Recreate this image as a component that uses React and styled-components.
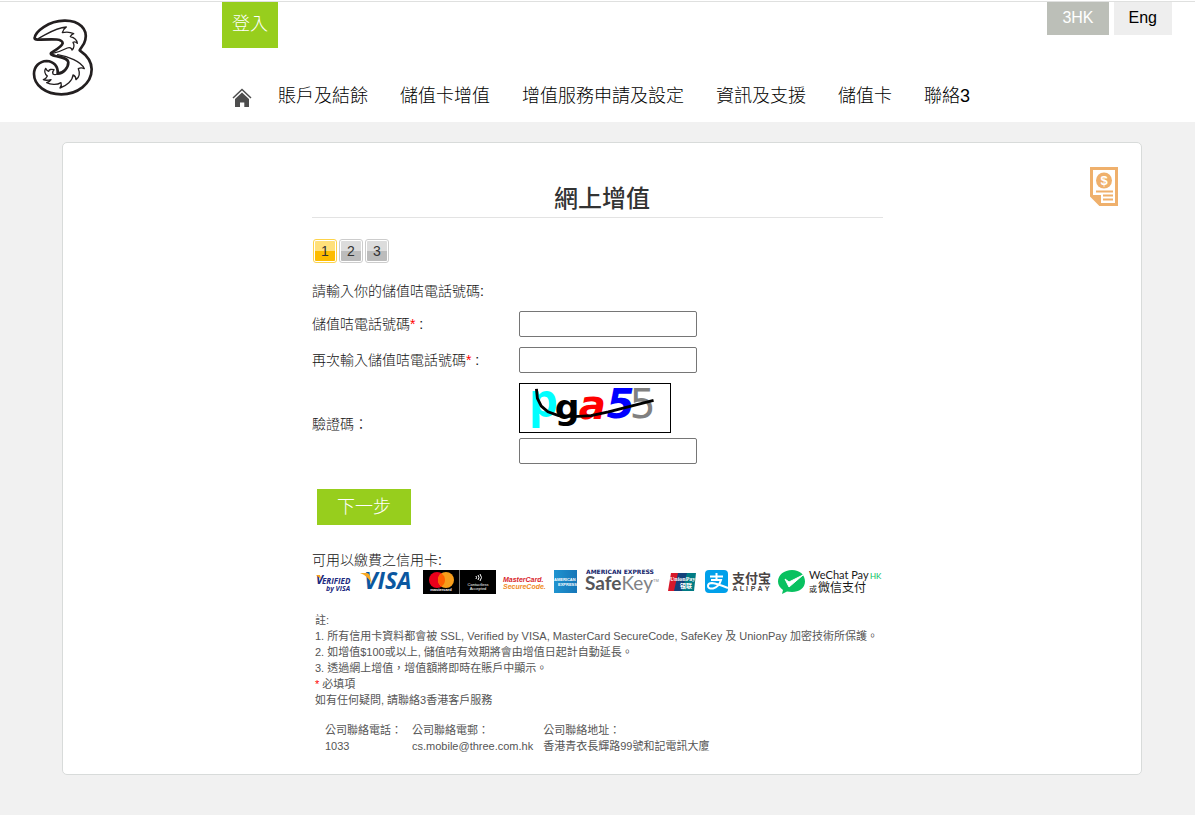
import React from 'react';
import styled, { createGlobalStyle } from 'styled-components';

const GlobalStyle = createGlobalStyle`
  *, *::before, *::after { box-sizing: border-box; }
  body {
    margin: 0;
    background: #f1f1f1;
    color: #333;
    font: 14px/20px "Liberation Sans", "Noto Sans CJK TC", sans-serif;
  }
  a { color: inherit; text-decoration: none; }
  svg { display: block; }
`;

const Header = styled.header`
  background: #fff;
  padding-top: 1px;
`;

const HeaderBar = styled.div`
  display: flex;
  align-items: flex-start;
  min-height: 121px;
  border-top: 1px solid #dfe0df;
`;

const LogoLink = styled.a`
  flex: none;
  width: 222px;
  padding: 16px 0 0 32px;
`;

const HeaderMain = styled.div`
  flex: 1;
  min-width: 0;
`;

const LoginLink = styled.a`
  display: inline-block;
  height: 46px;
  padding: 0 10px;
  background: #97ce1d;
  color: #fff;
  font-size: 18px;
  font-weight: 300;
  line-height: 44px;
  vertical-align: top;
`;

const Nav = styled.nav`
  display: flex;
  align-items: center;
  gap: 26px;
  padding: 34px 0 0 10px;
`;

const HomeLink = styled.a`
  padding-top: 3px;
`;

const NavList = styled.ul`
  display: flex;
  flex-wrap: wrap;
  column-gap: 32px;
  margin: 0;
  padding: 0;
  list-style: none;
  color: #000;
  font-size: 18px;
  font-weight: 300;
  line-height: 28px;
`;

const Languages = styled.div`
  display: flex;
  gap: 5px;
  margin-right: 23px;
`;

const LanguageLink = styled.a`
  height: 33px;
  padding: 0 15px;
  font-size: 16px;
  line-height: 31px;
  background: ${(p) => (p.$muted ? '#bcbfb8' : '#eee')};
  color: ${(p) => (p.$muted ? '#fff' : '#000')};
`;

const Card = styled.main`
  display: grid;
  grid-template-columns: 1fr minmax(0, 580px) 1fr;
  margin: 20px 53px 40px 62px;
  padding: 24px 23px 20px;
  background: #fff;
  border: 1px solid #d8dbda;
  border-radius: 5px;
`;

const Content = styled.div`
  grid-column: 2;
`;

const BillIcon = styled.svg`
  grid-column: 3;
  justify-self: end;
`;

const Title = styled.h1`
  margin: 16px 0 2px;
  font-size: 24px;
  font-weight: 500;
  line-height: 32px;
  text-align: center;
`;

const Divider = styled.hr`
  max-width: 571px;
  height: 1px;
  margin: 0;
  border: 0;
  background: #e3e3e3;
`;

const Steps = styled.ol`
  display: flex;
  gap: 2px;
  margin: 21px 0 18px;
  padding: 0 0 0 1px;
  list-style: none;
`;

const Step = styled.li`
  width: 24px;
  height: 24px;
  padding: 1px;
  border: 1px solid ${(p) => (p.$active ? '#fdd34a' : '#ccc')};
  border-radius: 3px;
  background: ${(p) =>
    p.$active
      ? 'linear-gradient(#ffe07a 50%, #fdbc00 50%)'
      : 'linear-gradient(#dcdcdc 50%, #bcbcbc 50%)'};
  background-clip: content-box;
  line-height: 20px;
  text-align: center;
`;

const Intro = styled.p`
  margin: 0;
  color: #111;
  font-weight: 300;
`;

const Form = styled.form`
  display: grid;
  gap: 10px;
  margin-top: 10px;
`;

const Row = styled.div`
  display: grid;
  grid-template-columns: 207px 1fr;
  align-items: center;
`;

const Label = styled.label`
  color: #111;
  font-weight: 300;
`;

const Required = styled.span`
  color: #f00;
`;

const Fields = styled.div`
  display: grid;
  gap: 5px;
  justify-items: start;
`;

const TextInput = styled.input`
  width: 178px;
  height: 26px;
  padding: 1px 4px;
  border: 1px solid #767676;
  border-radius: 2px;
  background: #fff;
  font: inherit;
`;

const Captcha = styled.svg`
  border: 1px solid #000;
`;

const NextButton = styled.button`
  justify-self: start;
  height: 36px;
  margin: 15px 0 0 5px;
  padding: 0 20px 4px;
  border: 0;
  background: #97ce1d;
  color: #fff;
  font-family: inherit;
  font-size: 18px;
  font-weight: 300;
`;

const Payment = styled.section`
  margin-top: 25px;
`;

const CardLogos = styled.div`
  display: flex;
  flex-wrap: wrap;
  gap: 8px;
  padding-left: 4px;

  svg { flex: none; overflow: visible; }
`;

const Notes = styled.section`
  margin-top: 18px;
  padding-left: 3px;
  color: #555;
  font-size: 11px;
  line-height: 16px;

  p { margin: 0; }
`;

const Contacts = styled.dl`
  display: flex;
  flex-wrap: wrap;
  gap: 10px;
  margin: 14px 0 0;
  padding-left: 10px;

  dd { margin: 0; }
`;

const navItems = ['賬戶及結餘', '儲值卡增值', '增值服務申請及設定', '資訊及支援', '儲值卡', '聯絡3'];

const contacts = [
  ['公司聯絡電話：', '1033'],
  ['公司聯絡電郵：', 'cs.mobile@three.com.hk'],
  ['公司聯絡地址：', '香港青衣長輝路99號和記電訊大廈'],
];

function ThreeLogo() {
  return (
    <svg width="62" height="78" viewBox="96 54 186 234" fill="none" stroke="#231f20" strokeLinejoin="round" strokeLinecap="round" role="img" aria-label="3">
      <path strokeWidth="8" d="M104 114C105 96 145 62 193 62C240 61 263 89 256 119C253 135 242 143 239 151C261 166 275 184 275 208C275 252 231 283 184 283C137 283 102 256 102 222C102 199 118 184 140 183C161 184 175 199 173 221C190 220 205 204 205 187C203 173 183 172 166 168C159 166 150 163 153 159C161 153 186 141 188 130C188 116 162 117 121 119C110 119 103 118 104 114Z" />
      <path strokeWidth="4" d="M116 115C145 100 167 83 199 81C191 87 188 92 187 98C199 95 213 97 221 101C216 103 213 106 211 110C223 113 231 121 232 130C228 126 222 125 219 127C225 137 222 144 216 150C215 144 209 141 202 144C190 150 177 156 158 160" />
      <path strokeWidth="4" d="M173 164C204 169 244 184 253 206C247 203 240 203 235 206C240 218 238 231 228 239C228 232 225 227 219 225C218 242 200 257 180 264C184 259 185 253 183 248C171 256 151 254 140 248C147 246 151 243 153 239C144 241 135 241 130 239C136 237 140 233 142 228C135 222 132 213 137 205C139 210 142 213 146 214C147 208 154 207 162 209C158 213 157 217 159 222C163 225 168 224 172 222" />
    </svg>
  );
}

function HomeIcon() {
  return (
    <svg width="20" height="19" viewBox="0 0 20 19" role="img" aria-label="主頁">
      <path d="M1 10L10 1.5L19 10" fill="none" stroke="#4d4d4d" strokeWidth="1.5" />
      <path d="M3 11L10 4.5L17 11V19H12.3V14.5H8V19H3Z" fill="#4d4d4d" />
    </svg>
  );
}

function CaptchaImage() {
  return (
    <Captcha width="152" height="50" viewBox="0 0 152 50" role="img" aria-label="驗證碼圖片">
      <g fontFamily="DejaVu Sans" fontWeight="700" fontSize="42">
        <text x="7" y="34" fill="#0ff" fontFamily="Open Sans" fontSize="48">p</text>
        <text x="34" y="36" fill="#000" fontSize="36">g</text>
        <text x="59" y="36" fill="#f00" fontStyle="italic">a</text>
        <text x="88" y="35" fill="#00f" fontStyle="italic">5</text>
        <text x="112" y="35" fill="#808080" fontWeight="400" fontSize="43">5</text>
      </g>
      <path d="M15 5L16 15L20 23L27 29L38 33L54 34L72 33L90 29L137 17" fill="none" stroke="#000" strokeWidth="3" />
    </Captcha>
  );
}

function PaymentLogos() {
  return (
    <CardLogos>
      <svg width="36" height="24" viewBox="0 0 36 24" role="img" aria-label="Verified by VISA">
        <g fill="#1b2a80" fontFamily="Open Sans" fontWeight="700" fontStyle="italic">
          <text x="0" y="14" fontSize="12">V</text>
          <text x="6" y="14" fontSize="8">ERIFIED</text>
          <text x="10" y="21" fontSize="7">by VISA</text>
        </g>
        <path d="M0 5H4L5 9Z" fill="#f9a51a" />
      </svg>
      <svg width="55" height="24" viewBox="0 0 55 24" role="img" aria-label="VISA">
        <text x="4" y="19" fontFamily="Open Sans" fontWeight="700" fontStyle="italic" fontSize="23" fill="#0b57a0">VISA</text>
        <path d="M0 3H7Q9 3 10 6L12 14Q8 6 0 3Z" fill="#f7a823" />
      </svg>
      <svg width="73" height="24" viewBox="0 0 73 24" role="img" aria-label="mastercard contactless">
        <path d="M0 0H73V24H0Z" fill="#000" />
        <circle cx="14" cy="10" r="8" fill="#eb001b" />
        <circle cx="23" cy="10" r="8" fill="#f79e1b" />
        <path d="M18.500 3.400A8 8 0 0 1 18.500 16.600A8 8 0 0 1 18.500 3.400Z" fill="#ff5f00" />
        <path d="M36.500 0V24" stroke="#777" />
        <g fill="#fff" fontFamily="Liberation Sans" fontSize="4" textAnchor="middle">
          <text x="18" y="21" fontWeight="700">mastercard</text>
          <text x="55" y="16">Contactless</text>
          <text x="55" y="20">Accepted</text>
        </g>
        <path d="M53 6Q54 7.500 53 9M55 5Q57 7.500 55 10M57 4Q60 7.500 57 11" fill="none" stroke="#fff" />
      </svg>
      <svg width="40" height="24" viewBox="0 0 40 24" role="img" aria-label="MasterCard SecureCode">
        <g fontFamily="Liberation Sans" fontWeight="700" fontStyle="italic" fontSize="7">
          <text x="-1" y="12" fill="#d8232a">MasterCard.</text>
          <text x="-1" y="19" fill="#f08a24">SecureCode.</text>
        </g>
      </svg>
      <svg width="25" height="24" viewBox="0 0 25 24" role="img" aria-label="American Express">
        <defs>
          <linearGradient id="amex" x2="1">
            <stop stopColor="#1f94d0" />
            <stop offset="1" stopColor="#1676b8" />
          </linearGradient>
        </defs>
        <path d="M2 0H25V23H2Z" fill="url(#amex)" />
        <g fill="#fff" fontFamily="Liberation Sans" fontWeight="700" fontSize="4">
          <text x="2" y="11">AMERICAN</text>
          <text x="6" y="16">EXPRESS</text>
        </g>
      </svg>
      <svg width="74" height="24" viewBox="0 0 74 24" role="img" aria-label="American Express SafeKey">
        <text x="1" y="4" fontFamily="DejaVu Sans" fontWeight="700" fontSize="6" fill="#14246b">AMERICAN EXPRESS</text>
        <text x="0" y="20" fontFamily="Lato" fontSize="19" fill="#808285">
          <tspan fontWeight="700" fill="#55565a">Safe</tspan>Key
        </text>
        <text x="68" y="12" fontFamily="Liberation Sans" fontSize="4" fill="#808285">TM</text>
      </svg>
      <svg width="30" height="24" viewBox="0 0 30 24" role="img" aria-label="UnionPay">
        <path d="M4 3H13L9 21H1Z" fill="#d7182a" />
        <path d="M11 3H21L17 21H7Z" fill="#14417b" />
        <path d="M20 3H29L27 21H15Z" fill="#007b84" />
        <g fill="#fff" fontWeight="700" fontFamily="Liberation Serif, Noto Sans CJK SC" fontSize="6">
          <text x="3" y="11">UnionPay</text>
          <text x="13" y="18">银联</text>
        </g>
      </svg>
      <svg width="65" height="24" viewBox="0 0 65 24" role="img" aria-label="支付宝 ALIPAY">
        <rect width="23" height="23" rx="4" fill="#00a0ea" />
        <path d="M5 6.500H18M11.500 3V9.500M6 10H16Q14 17 8 18.500Q3 19 3 16Q3 13 7 13Q12 13.500 23 18" fill="none" stroke="#fff" strokeWidth="2" />
        <text x="27" y="13" fontFamily="Noto Sans CJK SC" fontWeight="700" fontSize="13" fill="#4a4444">支付宝</text>
        <g fontFamily="Liberation Sans" fontWeight="700" fontSize="7" fill="#4a4444" textAnchor="middle">
          <text x="30" y="21">A</text><text x="37" y="21">L</text><text x="42" y="21">I</text>
          <text x="48" y="21">P</text><text x="55" y="21">A</text><text x="62" y="21">Y</text>
        </g>
      </svg>
      <svg width="103" height="24" viewBox="0 0 103 24" role="img" aria-label="WeChat Pay HK 或微信支付">
        <path d="M14 0C22 0 27 5 27 11.500C27 18 21 22 14 22L9 21.500L4 24L5 20C2 18 0 15 0 11.500C0 5 6 0 14 0Z" fill="#09c160" />
        <path d="M7 9L11 12L25 5L11 17Z" fill="#fff" stroke="#fff" strokeLinejoin="round" />
        <g fontFamily="Lato, Noto Sans CJK TC" fill="#1a1a1a">
          <text x="31" y="9" fontSize="11">WeChat Pay</text>
          <text x="92" y="9" fontSize="8" fill="#09c160">HK</text>
          <text x="31" y="22" fontSize="8">或</text>
          <text x="40" y="22" fontSize="12">微信支付</text>
        </g>
      </svg>
    </CardLogos>
  );
}

export default function App() {
  return (
    <>
      <GlobalStyle />
      <Header>
        <HeaderBar>
          <LogoLink href="#"><ThreeLogo /></LogoLink>
          <HeaderMain>
            <LoginLink href="#login">登入</LoginLink>
            <Nav>
              <HomeLink href="#home"><HomeIcon /></HomeLink>
              <NavList>
                {navItems.map((item) => (
                  <li key={item}><a href="#nav">{item}</a></li>
                ))}
              </NavList>
            </Nav>
          </HeaderMain>
          <Languages>
            <LanguageLink href="#3hk" $muted>3HK</LanguageLink>
            <LanguageLink href="#eng">Eng</LanguageLink>
          </Languages>
        </HeaderBar>
      </Header>
      <Card>
        <Content>
          <Title>網上增值</Title>
          <Divider />
          <Steps>
            <Step $active aria-current="step">1</Step>
            <Step>2</Step>
            <Step>3</Step>
          </Steps>
          <Intro>請輸入你的儲值咭電話號碼:</Intro>
          <Form onSubmit={(e) => e.preventDefault()}>
            <Row>
              <Label htmlFor="phone">儲值咭電話號碼<Required>*</Required> :</Label>
              <TextInput id="phone" type="tel" />
            </Row>
            <Row>
              <Label htmlFor="phone-again">再次輸入儲值咭電話號碼<Required>*</Required> :</Label>
              <TextInput id="phone-again" type="tel" />
            </Row>
            <Row>
              <Label htmlFor="captcha">驗證碼：</Label>
              <Fields>
                <CaptchaImage />
                <TextInput id="captcha" type="text" />
              </Fields>
            </Row>
            <NextButton type="submit">下一步</NextButton>
          </Form>
          <Payment>
            <Intro>可用以繳費之信用卡:</Intro>
            <PaymentLogos />
          </Payment>
          <Notes>
            <p>註:</p>
            <p>1. 所有信用卡資料都會被 SSL, Verified by VISA, MasterCard SecureCode, SafeKey 及 UnionPay 加密技術所保護。</p>
            <p>2. 如增值$100或以上, 儲值咭有效期將會由增值日起計自動延長。</p>
            <p>3. 透過網上增值，增值額將即時在賬戶中顯示。</p>
            <p><Required>*</Required> 必填項</p>
            <p>如有任何疑問, 請聯絡3香港客戶服務</p>
            <Contacts>
              {contacts.map(([term, value]) => (
                <div key={term}>
                  <dt>{term}</dt>
                  <dd>{value}</dd>
                </div>
              ))}
            </Contacts>
          </Notes>
        </Content>
        <BillIcon width="28" height="40" viewBox="0 0 28 40" aria-hidden="true">
          <path d="M1.500 1.500H26.500V37.500H10L1.500 29Z" fill="none" stroke="#efb06c" strokeWidth="3" />
          <path d="M1 28H11V38Z" fill="#efb06c" />
          <circle cx="14" cy="13.500" r="8" fill="#efb06c" />
          <text x="14" y="18" fill="#fff" fontFamily="Liberation Sans" fontWeight="700" fontSize="13" textAnchor="middle">$</text>
          <path d="M6 24.500H23M13 28.500H23M13 32.500H23" stroke="#efb06c" strokeWidth="2" />
        </BillIcon>
      </Card>
    </>
  );
}
